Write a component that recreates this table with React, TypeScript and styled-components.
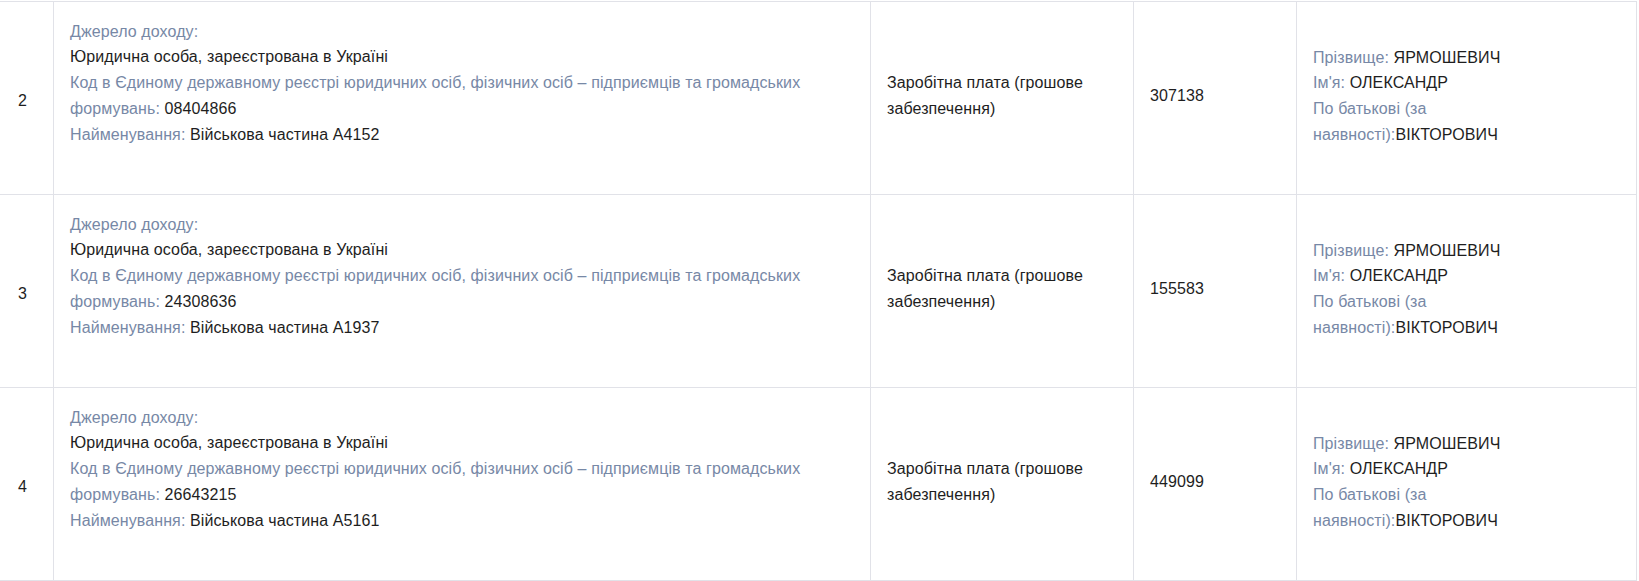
import React from "react";
import styled, { createGlobalStyle } from "styled-components";

const GlobalStyle = createGlobalStyle`
  html, body {
    margin: 0;
    padding: 0;
    background: #ffffff;
  }
  body {
    font-family: "Liberation Sans", Arial, sans-serif;
    font-size: 16px;
    color: #1e1e1e;
  }
  * { box-sizing: border-box; }
`;

const Table = styled.div`
  display: grid;
  grid-template-columns: 54px 817px 263px 163px 340px;
  margin-top: 1px;
  border-top: 1px solid #e1e2e8;
  width: 1637px;
`;

const Cell = styled.div<{ $pad?: number }>`
  display: flex;
  align-items: center;
  border-right: 1px solid #e1e2e8;
  border-bottom: 1px solid #e1e2e8;
  padding: 0 16px 0 ${(p) => p.$pad ?? 16}px;
  height: 193px;
  line-height: 25.7px;
  font-size: 16px;
  letter-spacing: 0.1px;
`;

const Block = styled.div<{ $shift?: number }>`
  margin-top: ${(p) => (p.$shift && p.$shift > 0 ? p.$shift : 0)}px;
  margin-bottom: ${(p) => (p.$shift && p.$shift < 0 ? -p.$shift : 0)}px;
`;

const Line = styled.div``;

const Label = styled.span`
  color: #7788a6;
`;

const Value = styled.span`
  color: #1e1e1e;
`;

const NameBlock = styled(Block)`
  max-width: 270px;
`;

type Row = { n: number; code: string; unit: string; amount: string };

const rows: Row[] = [
  { n: 2, code: "08404866", unit: "Військова частина А4152", amount: "307138" },
  { n: 3, code: "24308636", unit: "Військова частина А1937", amount: "155583" },
  { n: 4, code: "26643215", unit: "Військова частина А5161", amount: "449099" },
];

export default function App() {
  return (
    <>
      <GlobalStyle />
      <Table>
        {rows.map((r) => (
          <React.Fragment key={r.n}>
            <Cell $pad={18}>
              <Block $shift={6}>{r.n}</Block>
            </Cell>
            <Cell>
              <Block $shift={-30}>
                <Line>
                  <Label>Джерело доходу:</Label>
                </Line>
                <Line>
                  <Value>Юридична особа, зареєстрована в Україні</Value>
                </Line>
                <Line>
                  <Label>
                    Код в Єдиному державному реєстрі юридичних осіб, фізичних осіб – підприємців та громадських формувань:
                  </Label>{" "}
                  <Value>{r.code}</Value>
                </Line>
                <Line>
                  <Label>Найменування:</Label> <Value>{r.unit}</Value>
                </Line>
              </Block>
            </Cell>
            <Cell>
              <Block $shift={-4}>Заробітна плата (грошове забезпечення)</Block>
            </Cell>
            <Cell>
              <Block $shift={-4}>{r.amount}</Block>
            </Cell>
            <Cell>
              <NameBlock $shift={-4}>
                <Line>
                  <Label>Прізвище:</Label> <Value>ЯРМОШЕВИЧ</Value>
                </Line>
                <Line>
                  <Label>Ім'я:</Label> <Value>ОЛЕКСАНДР</Value>
                </Line>
                <Line>
                  <Label>По батькові (за наявності):</Label>
                  <Value>ВІКТОРОВИЧ</Value>
                </Line>
              </NameBlock>
            </Cell>
          </React.Fragment>
        ))}
      </Table>
    </>
  );
}
